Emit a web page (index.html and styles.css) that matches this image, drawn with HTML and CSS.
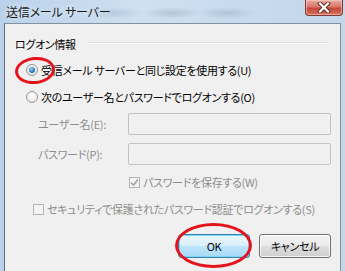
FILE: index.html
```html
<!DOCTYPE html>
<html lang="ja">
<head>
    <meta charset="UTF-8">
    <title>送信メール サーバー</title>
    <link rel="stylesheet" href="styles.css">
</head>
<body>
    <div class="window">
        <div class="titlebar">
            <span class="title">送信メール サーバー</span>
            <button class="close-btn">
                <svg width="14" height="11" viewBox="0 0 14 11">
                    <path d="M3 1.5 L11 9.5 M11 1.5 L3 9.5" stroke="#5a2a24" stroke-width="4" stroke-linecap="square"/>
                    <path d="M3 1.5 L11 9.5 M11 1.5 L3 9.5" stroke="#ffffff" stroke-width="2.2" stroke-linecap="square"/>
                </svg>
            </button>
        </div>

        <div class="panel">
            <div class="group-head">
                <span class="group-label">ログオン情報</span>
                <span class="group-line"></span>
            </div>

            <label class="option">
                <span class="radio checked"></span>
                <span>受信メール サーバーと同じ設定を使用する(U)</span>
            </label>
            <label class="option">
                <span class="radio"></span>
                <span>次のユーザー名とパスワードでログオンする(O)</span>
            </label>

            <div class="field">
                <span class="field-label">ユーザー名(E):</span>
                <span class="input"></span>
            </div>
            <div class="field field-pass">
                <span class="field-label">パスワード(P):</span>
                <span class="input"></span>
            </div>

            <div class="check-row save-row">
                <span class="checkbox">
                    <svg width="9" height="9" viewBox="0 0 9 9">
                        <path d="M1 4.5 L3.5 7 L8 1.5" fill="none" stroke="#a4a4a4" stroke-width="1.6"/>
                    </svg>
                </span>
                <span>パスワードを保存する(W)</span>
            </div>

            <div class="check-row secure-row">
                <span class="checkbox"></span>
                <span>セキュリティで保護されたパスワード認証でログオンする(S)</span>
            </div>

            <div class="buttons">
                <button class="btn btn-default">OK</button>
                <button class="btn">キャンセル</button>
            </div>
        </div>

        <!-- annotation marks drawn over the screenshot -->
        <div class="mark mark-radio"></div>
        <div class="mark mark-ok"></div>
    </div>
</body>
</html>
```

FILE: styles.css
```css
* {
    margin: 0;
    padding: 0;
    box-sizing: border-box;
}

body {
    width: 345px;
    height: 271px;
    overflow: hidden;
    background: #c4d8ec;
    font-family: "Noto Sans CJK JP", "Noto Sans", sans-serif;
    font-feature-settings: "palt";
    font-size: 11px;
    letter-spacing: -0.3px;
    color: #000;
    white-space: nowrap;
}

.window {
    position: relative;
    width: 345px;
    height: 271px;
    display: flex;
    flex-direction: column;
    padding: 0 4px 0 4px;
    background: linear-gradient(90deg, #b9d1ea 0%, #cfe0f1 40%, #c8dbee 70%, #c2d7ec 100%);
}

.titlebar {
    height: 23px;
    display: flex;
    align-items: flex-start;
    justify-content: space-between;
    background:
        radial-gradient(ellipse 30px 6px at 110px 13px, rgba(120, 140, 160, 0.25), transparent),
        radial-gradient(ellipse 28px 6px at 168px 13px, rgba(120, 140, 160, 0.3), transparent),
        radial-gradient(ellipse 30px 6px at 222px 13px, rgba(120, 140, 160, 0.3), transparent);
}

.title {
    margin-top: 4px;
    margin-left: 2px;
    font-size: 12px;
    line-height: 16px;
    letter-spacing: -0.2px;
    color: #1a1a1a;
    text-shadow: 0 0 6px rgba(255, 255, 255, 0.9);
}

.close-btn {
    width: 38px;
    height: 16px;
    margin-right: -2px;
    border: 1px solid #7d3b34;
    border-top: none;
    border-radius: 0 0 4px 4px;
    background: linear-gradient(180deg, #e9a99c 0%, #d9786b 45%, #c4473b 55%, #d7705f 100%);
    display: flex;
    align-items: center;
    justify-content: center;
    box-shadow: inset 0 0 0 1px rgba(255, 220, 210, 0.5);
}

.close-btn svg {
    display: block;
}

.panel {
    flex: 1;
    background: #f0f0f0;
    border: 1px solid #83929f;
    border-bottom: none;
    border-left-color: #5f6d7a;
    padding: 12px 9px 0 10px;
    display: flex;
    flex-direction: column;
}

.group-head {
    height: 16px;
    display: flex;
    align-items: center;
}

.group-label {
    line-height: 16px;
}

.group-line {
    flex: 1;
    height: 2px;
    margin-left: 12px;
    margin-right: 4px;
    margin-top: -2px;
    background: #d5dfe5;
    border-bottom: 1px solid #fff;
}

.option {
    height: 27px;
    display: flex;
    align-items: center;
    gap: 3px;
    padding-left: 11px;
}

.option:first-of-type {
    margin-top: 4px;
}

.radio {
    width: 12px;
    height: 12px;
    flex: none;
    border-radius: 50%;
    border: 1px solid #969696;
    background: radial-gradient(circle at 50% 40%, #ffffff 0%, #f1f1f1 50%, #dcdcdc 100%);
    position: relative;
}

.radio.checked::after {
    content: "";
    position: absolute;
    left: 2px;
    top: 2px;
    width: 6px;
    height: 6px;
    border-radius: 50%;
    background: radial-gradient(circle at 40% 35%, #9fd2f5 0%, #2a7fc0 55%, #10466f 100%);
}

.field {
    height: 22px;
    margin-top: 3px;
    display: flex;
    align-items: center;
    color: #8d8d8d;
}

.field-pass {
    margin-top: 8px;
}

.field-label {
    width: 113px;
    flex: none;
    padding-left: 23px;
}

.input {
    width: 204px;
    height: 22px;
    border: 1px solid #c2c2c2;
    border-radius: 2px;
    background: #f0f0f0;
}

.check-row {
    height: 18px;
    display: flex;
    align-items: center;
    gap: 3px;
    color: #8d8d8d;
}

.save-row {
    margin-top: 8px;
    padding-left: 114px;
}

.secure-row {
    margin-top: 9px;
    padding-left: 18px;
}

.checkbox {
    width: 11px;
    height: 11px;
    flex: none;
    border: 1px solid #b4b4b4;
    background: #f4f4f4;
    display: flex;
    align-items: center;
    justify-content: center;
}

.checkbox svg {
    display: block;
}

.buttons {
    margin-top: 16px;
    display: flex;
    justify-content: flex-end;
    gap: 9px;
}

.btn {
    width: 72px;
    height: 24px;
    border: 1px solid #707070;
    border-radius: 3px;
    font-family: inherit;
    font-feature-settings: "palt";
    font-size: 11px;
    letter-spacing: -0.3px;
    color: #000;
    background: linear-gradient(180deg, #f2f2f2 0%, #ebebeb 48%, #dddddd 52%, #cfcfcf 100%);
    box-shadow: inset 0 0 0 1px rgba(255, 255, 255, 0.8);
}

.btn-default {
    border-color: #3c7fb1;
    background: linear-gradient(180deg, #eaf6fd 0%, #d9f0fc 48%, #bee6fd 52%, #a7d9f5 100%);
    box-shadow: inset 0 0 0 1px #7ad5f7;
}

.mark {
    position: absolute;
    border: 3px solid #e5141c;
    border-radius: 50%;
    pointer-events: none;
}

.mark-radio {
    left: 15px;
    top: 57px;
    width: 40px;
    height: 27px;
    transform: rotate(-6deg);
}

.mark-ok {
    left: 175px;
    top: 223px;
    width: 77px;
    height: 45px;
}
```
